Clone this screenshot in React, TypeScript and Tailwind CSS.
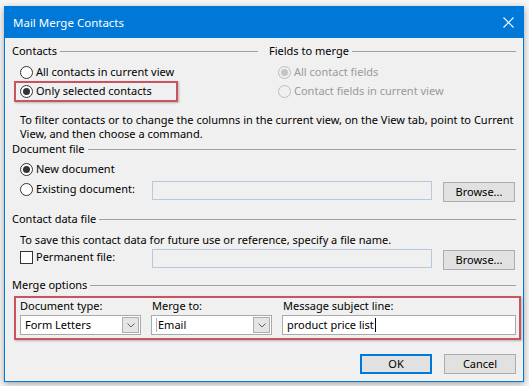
import React from 'react';

function Radio({ checked, disabled }: { checked?: boolean; disabled?: boolean }) {
  return (
    <span
      className={`flex h-[13px] w-[13px] shrink-0 items-center justify-center rounded-full border ${
        disabled ? 'border-[#bcbcbc] bg-[#f0f0f0]' : 'border-[#333333] bg-white'
      }`}
    >
      {checked && (
        <span className={`h-[7px] w-[7px] rounded-full ${disabled ? 'bg-[#c4c4c4]' : 'bg-[#333333]'}`} />
      )}
    </span>
  );
}

function GroupHeader({ label }: { label: string }) {
  return (
    <div className="flex h-[16px] items-center gap-[3px]">
      <span className="whitespace-nowrap">{label}</span>
      <span className="h-px flex-1 bg-[#a0a0a0]" />
    </div>
  );
}

function Button({ label, primary }: { label: string; primary?: boolean }) {
  return (
    <div
      className={`flex h-[20px] w-[72px] shrink-0 items-center justify-center bg-[#e1e1e1] ${
        primary ? 'border-2 border-[#0078d7]' : 'border border-[#adadad]'
      }`}
    >
      {label}
    </div>
  );
}

function Select({ value, caret }: { value: string; caret?: boolean }) {
  return (
    <div className="flex h-[20px] w-[121px] items-center border border-[#a9a9a9] bg-white pl-[4px] pr-px">
      {caret && <span className="mr-px h-[14px] w-px bg-[#9fb8d6]" />}
      <span className="flex-1">{value}</span>
      <span className="flex h-[16px] w-[17px] items-center justify-center border border-[#adadad] bg-[#e5e5e5]">
        <svg width="8" height="5" viewBox="0 0 8 5">
          <path d="M0.5 0.5 L4 4 L7.5 0.5" fill="none" stroke="#606060" strokeWidth="1" />
        </svg>
      </span>
    </div>
  );
}

export default function App() {
  return (
    <div className="h-[386px] w-[529px] bg-[#f7f7f7] pl-[4px] pt-[6px] font-['Noto_Sans',sans-serif] text-[11px] text-black">
      <div className="flex h-[376px] w-[520px] flex-col border border-[#0078d7] bg-[#f0f0f0] shadow-[0_2px_7px_rgba(0,0,0,0.35)]">
        {/* title bar */}
        <div className="flex h-[31px] shrink-0 items-center justify-between bg-[#0078d7] pl-[8px] pr-[9px] text-[11.5px] text-white">
          <span>Mail Merge Contacts</span>
          <svg width="11" height="11" viewBox="0 0 11 11">
            <path d="M0.5 0.5 L10.5 10.5 M10.5 0.5 L0.5 10.5" stroke="white" strokeWidth="1.1" />
          </svg>
        </div>

        <div className="flex flex-col px-[7px]">
          {/* contacts / fields to merge */}
          <div className="mt-[5px] flex gap-[11px]">
            <div className="flex w-[246px] flex-col">
              <GroupHeader label="Contacts" />
              <div className="mt-[4px] flex h-[18px] items-center gap-[3px] pl-[8px]">
                <Radio />
                <span>All contacts in current view</span>
              </div>
              <div className="ml-[2px] flex h-[21px] w-[164px] items-center gap-[3px] border-2 border-[#c9545f] pl-[4px] shadow-[1px_1px_2px_rgba(0,0,0,0.25)]">
                <Radio checked />
                <span>Only selected contacts</span>
              </div>
            </div>
            <div className="flex flex-1 flex-col">
              <GroupHeader label="Fields to merge" />
              <div className="mt-[4px] flex h-[18px] items-center gap-[3px] pl-[9px] text-[#9a9a9a]">
                <Radio checked disabled />
                <span>All contact fields</span>
              </div>
              <div className="flex h-[21px] items-center gap-[3px] pl-[9px] text-[#9a9a9a]">
                <Radio disabled />
                <span>Contact fields in current view</span>
              </div>
            </div>
          </div>

          <p className="mt-[11px] whitespace-nowrap pl-[8px] leading-[14px]">
            To filter contacts or to change the columns in the current view, on the View tab, point to Current
            <br />
            View, and then choose a command.
          </p>

          {/* document file */}
          <GroupHeader label="Document file" />
          <div className="mt-[3px] flex h-[19px] items-center gap-[3px] pl-[8px]">
            <Radio checked />
            <span>New document</span>
          </div>
          <div className="mt-px flex h-[22px] items-start">
            <div className="flex h-[18px] w-[140px] items-center gap-[3px] pl-[8px]">
              <Radio />
              <span>Existing document:</span>
            </div>
            <div className="mt-px h-[19px] w-[280px] border border-[#b4c8e0] bg-[#f0f0f0]" />
            <div className="ml-[11px] mt-[2px]">
              <Button label="Browse..." />
            </div>
          </div>

          {/* contact data file */}
          <div className="mt-[9px]">
            <GroupHeader label="Contact data file" />
          </div>
          <p className="mt-[6px] pl-[8px] leading-[14px]">
            To save this contact data for future use or reference, specify a file name.
          </p>
          <div className="mt-px flex h-[22px] items-start">
            <div className="flex h-[19px] w-[140px] items-center gap-[3px] pl-[8px]">
              <span className="h-[13px] w-[13px] shrink-0 border border-[#333333] bg-white" />
              <span>Permanent file:</span>
            </div>
            <div className="mt-px h-[19px] w-[280px] border border-[#b4c8e0] bg-[#f0f0f0]" />
            <div className="ml-[11px] mt-[2px]">
              <Button label="Browse..." />
            </div>
          </div>

          {/* merge options */}
          <div className="mt-[7px]">
            <GroupHeader label="Merge options" />
          </div>
          <div className="ml-[2px] mt-[3px] w-[507px] border-2 border-[#c9545f] pb-[3px] pl-[4px] pt-px shadow-[1px_1px_2px_rgba(0,0,0,0.25)]">
            <div className="flex gap-[10px]">
              <div className="flex w-[121px] flex-col gap-[2px]">
                <span className="h-[14px] leading-[14px]">Document type:</span>
                <Select value="Form Letters" />
              </div>
              <div className="flex w-[121px] flex-col gap-[2px]">
                <span className="h-[14px] pl-px leading-[14px]">Merge to:</span>
                <Select value="Email" caret />
              </div>
              <div className="flex w-[234px] flex-col gap-[2px]">
                <span className="h-[14px] pl-px leading-[14px]">Message subject line:</span>
                <div className="flex h-[20px] items-center border border-[#a9a9a9] bg-white pl-[4px]">
                  <span>product price list</span>
                  <span className="ml-px h-[14px] w-px bg-black" />
                </div>
              </div>
            </div>
          </div>

          <div className="mt-[14px] flex justify-end gap-[12px]">
            <Button label="OK" primary />
            <Button label="Cancel" />
          </div>
        </div>
      </div>
    </div>
  );
}
